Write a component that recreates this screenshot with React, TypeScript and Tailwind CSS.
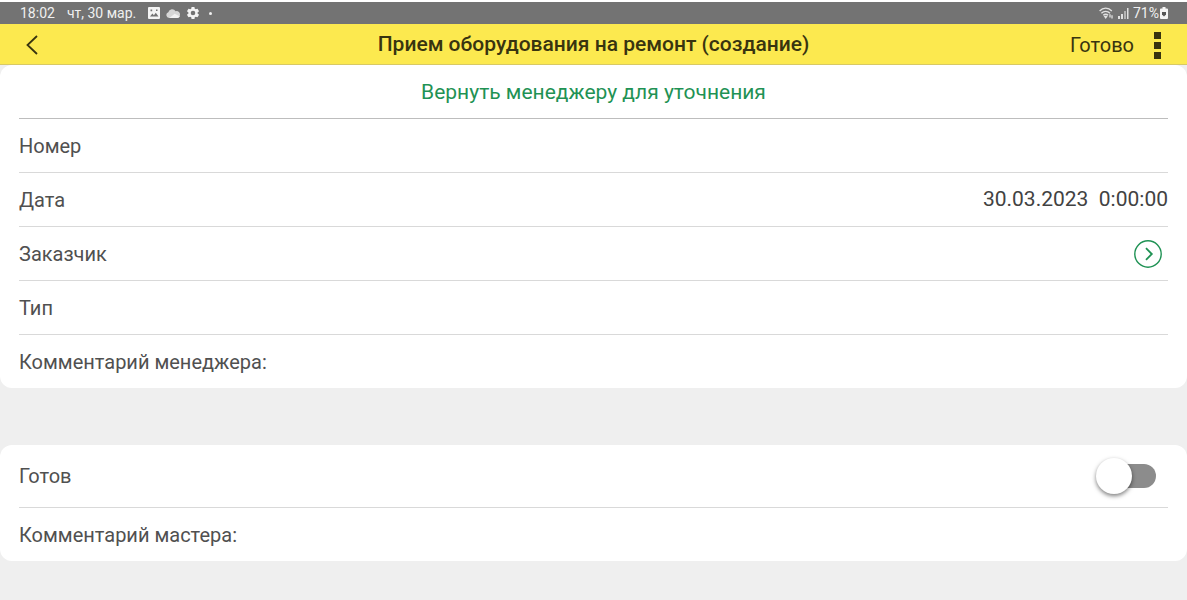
import React, { useState } from 'react';

const fontStack = "font-['Roboto','Liberation_Sans',sans-serif]";

const GalleryIcon = () => (
  <svg width="12" height="12" viewBox="0 0 12 12" aria-hidden="true">
    <path
      fill="#f4f4f4"
      fillRule="evenodd"
      d="M1 0h10a1 1 0 0 1 1 1v10a1 1 0 0 1-1 1H1a1 1 0 0 1-1-1V1a1 1 0 0 1 1-1zM2 9.500h8.500L7.800 5.800 5.900 8.200 4.400 6.600zM2.500 2.500v1.700h1.700V2.500zM8 2.500v1.500h1.500V2.500z"
    />
  </svg>
);

const CloudIcon = () => (
  <svg width="14" height="9" viewBox="0 0 14 9" aria-hidden="true">
    <path
      fill="#d6d6d6"
      d="M3.200 9A3 3 0 0 1 2.300 3.200 4 4 0 0 1 9.600 2.300 3.300 3.300 0 0 1 13.900 6.200 2.800 2.800 0 0 1 11.200 9z"
    />
    <path fill="#f2f2f2" d="M3.400 9 8.600 4.800 13.700 7.300A2.800 2.800 0 0 1 11.200 9z" />
  </svg>
);

const GearIcon = () => (
  <svg width="14" height="14" viewBox="1 1 22 22" aria-hidden="true">
    <path
      fill="#f4f4f4"
      d="M19.14 12.94c.04-.3.06-.61.06-.94s-.02-.64-.07-.94l2.03-1.580a.49.49 0 0 0 .12-.61l-1.920-3.320a.49.49 0 0 0-.59-.22l-2.390.96a7 7 0 0 0-1.620-.94l-.36-2.540a.48.48 0 0 0-.48-.41h-3.840a.47.47 0 0 0-.47.41l-.36 2.540c-.59.24-1.130.57-1.620.94l-2.390-.96a.48.48 0 0 0-.59.22L2.740 8.870a.47.47 0 0 0 .12.610l2.030 1.580c-.05.3-.09.63-.09.94s.02.64.07.94l-2.030 1.580a.49.49 0 0 0-.12.61l1.920 3.320c.12.22.37.29.59.22l2.390-.96c.5.38 1.030.7 1.620.94l.36 2.540c.05.24.24.41.48.41h3.840c.24 0 .44-.17.47-.41l.36-2.540c.59-.24 1.130-.56 1.620-.94l2.390.96c.22.08.47 0 .59-.22l1.920-3.320a.47.47 0 0 0-.12-.61zM12 15.600a3.600 3.600 0 1 1 0-7.200 3.600 3.600 0 0 1 0 7.200z"
    />
  </svg>
);

const WifiIcon = () => (
  <svg width="15" height="12" viewBox="0 0 15 12" fill="none" stroke="#e2e2e2" strokeWidth="1.3" aria-hidden="true">
    <path d="M.6 4C4 .2 9.400.2 12.800 4" />
    <path d="M2.400 6.200c2.400-2.500 6.200-2.500 8.600 0" />
    <path d="M4.300 8.300c1.300-1.400 3.500-1.400 4.800 0" />
    <path d="M5.700 9.300h2L6.700 10.800z" fill="#e2e2e2" />
    <path d="M11 7.300v3.200M13 8.300v3.200" />
  </svg>
);

const SignalIcon = () => (
  <svg width="11" height="11" viewBox="0 0 11 11" aria-hidden="true">
    <path fill="#e0e0e0" d="M0 8h2v3H0zM3 6h2v5H3z" />
    <path fill="#b4b4b4" d="M6 3h2v8H6z" />
    <path fill="#e0e0e0" d="M9 0h1.500v11H9z" />
  </svg>
);

const BatteryIcon = () => (
  <svg width="8" height="12" viewBox="0 0 8 12" aria-hidden="true">
    <path fill="#f4f4f4" d="M2.500 0h3v1.500H7a1 1 0 0 1 1 1V11a1 1 0 0 1-1 1H1a1 1 0 0 1-1-1V2.500a1 1 0 0 1 1-1h1.500z" />
    <path fill="#555" d="M2 5h4v2.500L4 9.500l-2-2z" />
  </svg>
);

const StatusBar = () => (
  <div className="flex h-[22px] items-center justify-between bg-[#737373] pl-5 pr-[19px] text-sm text-[#f0f0f0]">
    <div className="flex items-center">
      <span>18:02</span>
      <span className="ml-3">чт, 30 мар.</span>
      <span className="ml-3 flex items-center gap-[6px]">
        <GalleryIcon />
        <CloudIcon />
        <GearIcon />
      </span>
      <span className="ml-[9px] h-[3px] w-[3px] rounded-full bg-[#f0f0f0]" />
    </div>
    <div className="flex items-center">
      <WifiIcon />
      <span className="ml-1">
        <SignalIcon />
      </span>
      <span className="ml-1">71%</span>
      <span className="ml-px">
        <BatteryIcon />
      </span>
    </div>
  </div>
);

interface FieldProps {
  id: string;
  label: string;
  value?: string;
  last?: boolean;
}

const Field = ({ id, label, value = '', last = false }: FieldProps) => {
  const [text, setText] = useState(value);

  return (
    <div className={`flex items-center ${last ? 'h-[53px]' : 'h-[54px] border-b border-[#d9d9d9]'}`}>
      <label htmlFor={id} className="shrink-0">
        {label}
      </label>
      <input
        id={id}
        type="text"
        value={text}
        onChange={(e) => setText(e.target.value)}
        className="ml-4 min-w-0 flex-1 bg-transparent text-right text-[21px] text-[#424242] outline-none"
      />
    </div>
  );
};

const App = () => {
  const [ready, setReady] = useState(false);

  return (
    <div className={`min-h-screen bg-[#efefef] text-xl text-[#505050] ${fontStack}`}>
      <div className="border-t-2 border-white">
        <StatusBar />
      </div>

      {/* Header */}
      <header className="grid h-[41px] grid-cols-[1fr_auto_1fr] items-center border-b border-[#d8c964] bg-[#fce94f] pt-[2px] text-[#38340f]">
        <button type="button" aria-label="Назад" className="ml-6 flex h-8 w-8 items-center">
          <svg width="16" height="22" viewBox="0 0 16 22" fill="none" stroke="currentColor" strokeWidth="1.8">
            <path d="M13 2 3.500 11 13 20" />
          </svg>
        </button>
        <h1 className="text-[21px] font-medium">Прием оборудования на ремонт (создание)</h1>
        <div className="flex items-center justify-end pr-[26px]">
          <button type="button">Готово</button>
          <button type="button" aria-label="Меню" className="ml-5 flex flex-col gap-[3px]">
            <span className="h-[7px] w-[7px] bg-[#38340f]" />
            <span className="h-[7px] w-[7px] bg-[#38340f]" />
            <span className="h-[7px] w-[7px] bg-[#38340f]" />
          </button>
        </div>
      </header>

      <main>
        <section className="rounded-xl bg-white px-[19px]">
          <button type="button" className="block h-[54px] w-full border-b border-[#bdbdbd] pt-[2px] text-[21px] text-[#1f9254]">
            Вернуть менеджеру для уточнения
          </button>
          <Field id="number" label="Номер" />
          <Field id="date" label="Дата" value="30.03.2023  0:00:00" />
          <div className="flex h-[54px] items-center justify-between border-b border-[#d9d9d9]">
            <span id="customer">Заказчик</span>
            <button type="button" aria-labelledby="customer" className="mr-[6px] text-[#1f9254]">
              <svg width="28" height="28" viewBox="0 0 28 28" fill="none" stroke="currentColor">
                <circle cx="14" cy="14" r="13.200" strokeWidth="1.400" />
                <path d="M12 8.200 17.800 14 12 19.800" strokeWidth="1.800" />
              </svg>
            </button>
          </div>
          <Field id="type" label="Тип" />
          <Field id="manager-comment" label="Комментарий менеджера:" last />
        </section>

        <section className="mt-[57px] rounded-xl bg-white px-[19px]">
          <div className="flex h-[63px] items-center justify-between border-b border-[#d9d9d9]">
            <label htmlFor="ready">Готов</label>
            <input
              id="ready"
              type="checkbox"
              role="switch"
              checked={ready}
              onChange={(e) => setReady(e.target.checked)}
              className="relative mr-3 h-6 w-12 appearance-none rounded-full bg-[#8c8c8c] outline-none before:absolute before:-left-3 before:-top-[6px] before:h-9 before:w-9 before:rounded-full before:bg-white before:shadow-[0_2px_4px_rgba(0,0,0,0.5)] before:content-[''] checked:bg-[#1f9254] checked:before:left-6"
            />
          </div>
          <Field id="master-comment" label="Комментарий мастера:" last />
        </section>
      </main>
    </div>
  );
};

export default App;
